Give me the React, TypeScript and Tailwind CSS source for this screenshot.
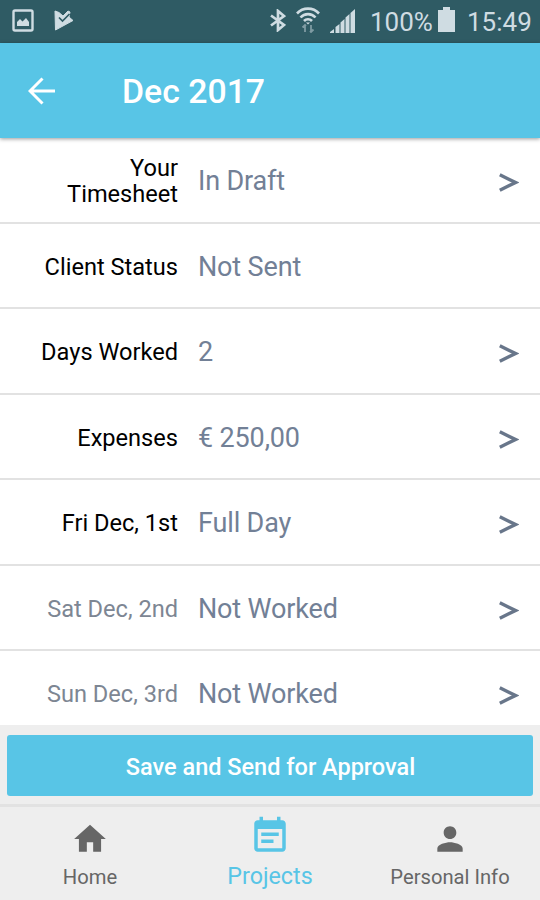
const rows = [
  { label: "Your Timesheet", value: "In Draft", link: true },
  { label: "Client Status", value: "Not Sent", link: false },
  { label: "Days Worked", value: "2", link: true },
  { label: "Expenses", value: "€ 250,00", link: true },
  { label: "Fri Dec, 1st", value: "Full Day", link: true },
  { label: "Sat Dec, 2nd", value: "Not Worked", link: true, muted: true },
  { label: "Sun Dec, 3rd", value: "Not Worked", link: true, muted: true },
];

function StatusBar() {
  return (
    <div className="h-[43px] shrink-0 bg-[#2f5b64] flex items-center pl-3 pr-[9px] text-[#cfdce2]">
      <svg className="-mt-0.5 w-[22px] h-[23px]" viewBox="0 0 22 23" fill="none">
        <rect x="1.5" y="1.5" width="19" height="20" rx="1.5" stroke="currentColor" strokeWidth="2.4" />
        <path d="M5 17v-4l3-3 2.500 2.500L14 9l3 4v4z" fill="currentColor" />
      </svg>
      <svg className="-mt-0.5 ml-5 w-5 h-[21px]" viewBox="0 0 20 21">
        <path d="M1 1l4 1.500L9 6l5-5 2 1-1 5 4 3.500L1.500 20z" fill="currentColor" stroke="currentColor" strokeLinejoin="round" />
        <path d="M5 7.500l3.500 3.500L15.500 4" fill="none" stroke="#2f5b64" strokeWidth="1.700" />
      </svg>

      <div className="ml-auto flex items-center">
        <svg className="-mt-0.5 w-4 h-[23px]" viewBox="0 0 16 23" fill="none" stroke="currentColor" strokeWidth="2.7">
          <path d="M1 6.500l13 9.500-6 5V2l6 5L1 16.500" />
        </svg>
        <svg className="ml-[10px] -mt-[3px] w-6 h-[26px]" viewBox="0 0 24 26" fill="none" stroke="currentColor" strokeWidth="2.6">
          <path d="M1 6.500c6-6.500 16-6.500 22 0M4.500 10.500c4-4.500 11-4.500 15 0M8 14c2.200-2.400 5.800-2.400 8 0" />
          <path d="M10 15.500h4l-2 2z" fill="currentColor" stroke="none" />
          <path d="M9 25v-7M6.500 20.500L9 18l1 1M15 18v7M17.500 22.500L15 25l-1-1" opacity=".5" strokeWidth="1.8" />
        </svg>
        <svg className="ml-[10px] -mt-0.5 w-[25px] h-6" viewBox="0 0 25 24" fill="currentColor">
          <path d="M0 24v-1l4-3v4zM5.500 24v-6l4-3v9zM10.500 24V13.500l4-3.500v14zM15.500 24V8.500l4-3.500v19zM20.500 24V4l4.500-4v24z" />
        </svg>
        <span className="ml-[15px] w-[63px] text-[26px] leading-none whitespace-nowrap">100%</span>
        <svg className="ml-[5px] -mt-[5px] w-[17px] h-[25px]" viewBox="0 0 17 25" fill="currentColor">
          <path d="M5 0h7v3h5v22H0V3h5z" />
        </svg>
        <span className="ml-3 w-[64px] text-[26px] leading-none">15:49</span>
      </div>
    </div>
  );
}

function Tab({ label, icon, active }: { label: string; icon: React.ReactNode; active?: boolean }) {
  return (
    <div className={`flex-1 flex flex-col items-center ${active ? "text-[#58c5e6] pt-2" : "text-[#666] pt-[13px]"}`}>
      {icon}
      <span className={active ? "mt-[5px] text-[23.300px] leading-7" : "mt-[7px] text-[20.200px] leading-6"}>{label}</span>
    </div>
  );
}

export default function App() {
  return (
    <div className="w-[540px] h-[900px] overflow-hidden flex flex-col bg-white font-['Roboto',sans-serif]">
      <StatusBar />

      {/* title bar */}
      <header className="relative h-[95px] shrink-0 bg-[#58c5e6] flex items-center text-white shadow-[0_1px_4px_rgba(0,0,0,0.4)]">
        <svg className="ml-7 w-7 h-7" viewBox="0 0 28 28" fill="none" stroke="currentColor" strokeWidth="3">
          <path d="M27 14H2.500M14.500 1.500L2 14l12.500 12.500" />
        </svg>
        <h1 className="ml-[66px] mt-0.5 text-[33.800px] leading-none font-medium">Dec 2017</h1>
      </header>

      {/* timesheet rows */}
      <div className="flex-1 min-h-0 overflow-hidden">
        {rows.map((row) => (
          <div key={row.label} className="h-[85.500px] border-b-2 border-[#e2e2e2] flex items-center">
            <span
              className={`w-[178px] pl-10 pt-[3px] text-right text-[23.600px] leading-[26px] ${row.muted ? "text-[#7d8693]" : "text-black"}`}
            >
              {row.label}
            </span>
            <span className="ml-5 pt-[3px] flex-1 text-[27px] tracking-[-0.15px] leading-8 text-[#728096]">{row.value}</span>
            {row.link && (
              <svg className="mr-[21px] mt-1.5 w-5 h-[19px]" viewBox="0 0 20 19" fill="none" stroke="#68768a" strokeWidth="3.4">
                <path d="M.8 1.800L16.500 9.500.8 17.200" />
              </svg>
            )}
          </div>
        ))}
      </div>

      <div className="h-[79px] shrink-0 bg-[#eee] px-[7px] pt-[10px]">
        <button className="w-full h-[61px] pt-1 pl-px rounded-[3px] bg-[#58c5e6] text-white text-[23.500px] font-medium">
          Save and Send for Approval
        </button>
      </div>

      {/* bottom tabs */}
      <nav className="h-[96px] shrink-0 bg-[#eee] border-t-3 border-[#e2e2e2] flex">
        <Tab
          label="Home"
          icon={
            <svg className="w-[38px] h-[38px]" viewBox="0 0 24 24" fill="currentColor">
              <path d="M10 20v-6h4v6h5v-8h3L12 3 2 12h3v8z" />
            </svg>
          }
        />
        <Tab
          label="Projects"
          active
          icon={
            <svg className="w-[42px] h-[42px]" viewBox="0 0 24 24" fill="currentColor">
              <path d="M17 10H7v2h10v-2zm2-7h-1V1h-2v2H8V1H6v2H5c-1.110 0-1.990.9-1.990 2L3 19c0 1.100.89 2 2 2h14c1.100 0 2-.9 2-2V5c0-1.100-.9-2-2-2zm0 16H5V8h14v11zm-5-5H7v2h7v-2z" />
            </svg>
          }
        />
        <Tab
          label="Personal Info"
          icon={
            <svg className="w-[40px] h-[38px]" viewBox="0 0 24 24" fill="currentColor">
              <path d="M12 12c2.210 0 4-1.790 4-4s-1.790-4-4-4-4 1.790-4 4 1.790 4 4 4zm0 2c-2.670 0-8 1.340-8 4v2h16v-2c0-2.660-5.330-4-8-4z" />
            </svg>
          }
        />
      </nav>
    </div>
  );
}
